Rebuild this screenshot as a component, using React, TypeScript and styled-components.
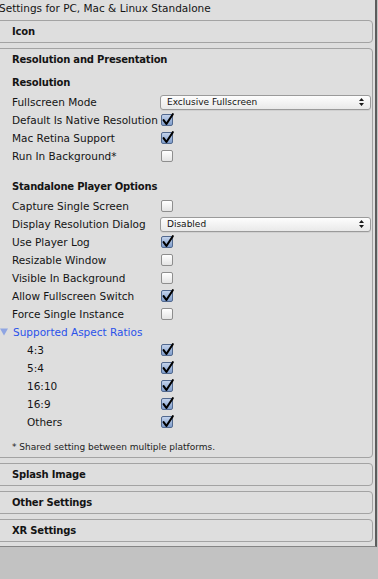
import React from 'react';
import styled, { createGlobalStyle } from 'styled-components';

const GlobalStyle = createGlobalStyle`
  html, body {
    margin: 0;
    padding: 0;
    background: #c2c2c2;
  }
  body {
    font-family: "DejaVu Sans", "Liberation Sans", sans-serif;
    color: #141414;
  }
`;

type Field =
  | { label: string; kind: 'select'; value: string; indent?: number }
  | { label: string; kind: 'check'; checked: boolean; indent?: number };

const resolutionFields: Field[] = [
  { label: 'Fullscreen Mode', kind: 'select', value: 'Exclusive Fullscreen' },
  { label: 'Default Is Native Resolution', kind: 'check', checked: true },
  { label: 'Mac Retina Support', kind: 'check', checked: true },
  { label: 'Run In Background*', kind: 'check', checked: false },
];

const playerFields: Field[] = [
  { label: 'Capture Single Screen', kind: 'check', checked: false },
  { label: 'Display Resolution Dialog', kind: 'select', value: 'Disabled' },
  { label: 'Use Player Log', kind: 'check', checked: true },
  { label: 'Resizable Window', kind: 'check', checked: false },
  { label: 'Visible In Background', kind: 'check', checked: false },
  { label: 'Allow Fullscreen Switch', kind: 'check', checked: true },
  { label: 'Force Single Instance', kind: 'check', checked: false },
];

const aspectFields: Field[] = [
  { label: '4:3', kind: 'check', checked: true, indent: 15 },
  { label: '5:4', kind: 'check', checked: true, indent: 15 },
  { label: '16:10', kind: 'check', checked: true, indent: 15 },
  { label: '16:9', kind: 'check', checked: true, indent: 15 },
  { label: 'Others', kind: 'check', checked: true, indent: 15 },
];

const Checkbox: React.FC<{ checked: boolean }> = ({ checked }) => (
  <Box $checked={checked}>
    {checked && (
      <CheckMark width="14" height="14" viewBox="0 0 14 14">
        <path d="M2.6 7.2 L5.4 11 L11.8 1.2" fill="none" stroke="#000" strokeWidth="2.1" strokeLinecap="round" strokeLinejoin="round" />
      </CheckMark>
    )}
  </Box>
);

const Popup: React.FC<{ value: string }> = ({ value }) => (
  <Select>
    <span>{value}</span>
    <svg width="5" height="8" viewBox="0 0 5 8">
      <path d="M2.5 0 L5 3 L0 3 Z M0 5 L5 5 L2.5 8 Z" fill="#1a1a1a" />
    </svg>
  </Select>
);

const FieldRow: React.FC<{ field: Field }> = ({ field }) => (
  <Row>
    <Label $indent={field.indent ?? 0}>{field.label}</Label>
    <Value>
      {field.kind === 'select' ? <Popup value={field.value} /> : <Checkbox checked={field.checked} />}
    </Value>
  </Row>
);

const App: React.FC = () => {
  return (
    <>
      <GlobalStyle />
      <Inspector>
        <Title>Settings for PC, Mac &amp; Linux Standalone</Title>
        <Panels>
          <Panel>
            <PanelHeader>Icon</PanelHeader>
          </Panel>
          <Panel>
            <PanelHeader>Resolution and Presentation</PanelHeader>
            <PanelBody>
              <SectionTitle>Resolution</SectionTitle>
              {resolutionFields.map((f) => (
                <FieldRow key={f.label} field={f} />
              ))}
              <SectionTitle $spaced>Standalone Player Options</SectionTitle>
              {playerFields.map((f) => (
                <FieldRow key={f.label} field={f} />
              ))}
              <Foldout>
                <svg width="8" height="8" viewBox="0 0 8 8">
                  <path d="M0 0.5 L8 0.5 L4 7.5 Z" fill="#8fa5e2" />
                </svg>
                <span>Supported Aspect Ratios</span>
              </Foldout>
              {aspectFields.map((f) => (
                <FieldRow key={f.label} field={f} />
              ))}
              <Footnote>* Shared setting between multiple platforms.</Footnote>
            </PanelBody>
          </Panel>
          <Panel>
            <PanelHeader>Splash Image</PanelHeader>
          </Panel>
          <Panel>
            <PanelHeader>Other Settings</PanelHeader>
          </Panel>
          <Panel>
            <PanelHeader>XR Settings</PanelHeader>
          </Panel>
        </Panels>
      </Inspector>
    </>
  );
};

export default App;

const Inspector = styled.div`
  width: 375px;
  height: 546px;
  background: #dedede;
  border-right: 2px solid #5c5c5c;
  border-bottom: 1px solid #858585;
  overflow: hidden;
`;

const Title = styled.div`
  height: 20px;
  line-height: 17px;
  margin-left: -1px;
  font-size: 10.5px;
  white-space: nowrap;
`;

const Panels = styled.div`
  display: flex;
  flex-direction: column;
  gap: 5px;
  width: 377px;
  margin-left: -4px;
`;

const Panel = styled.section`
  border: 1px solid #a3a3a3;
  border-radius: 4px;
  background: #dedede;
`;

const PanelHeader = styled.div`
  height: 21px;
  line-height: 21px;
  padding-left: 15px;
  font-size: 10px;
  font-weight: bold;
  letter-spacing: -0.2px;
  white-space: nowrap;
`;

const PanelBody = styled.div`
  padding: 2px 1px 4px 0;
`;

const SectionTitle = styled.div<{ $spaced?: boolean }>`
  height: 21px;
  line-height: 21px;
  margin-top: ${(p) => (p.$spaced ? '11px' : '0')};
  padding-left: 15px;
  font-size: 10px;
  font-weight: bold;
  letter-spacing: -0.2px;
  white-space: nowrap;
`;

const Row = styled.div`
  display: grid;
  grid-template-columns: 163px 1fr;
  align-items: center;
  height: 18px;
`;

const Label = styled.div<{ $indent: number }>`
  padding-left: ${(p) => 15 + p.$indent}px;
  font-size: 10.5px;
  white-space: nowrap;
  overflow: hidden;
`;

const Value = styled.div`
  display: flex;
  align-items: center;
  padding-left: 1px;
`;

const Box = styled.span<{ $checked: boolean }>`
  position: relative;
  display: block;
  width: 12px;
  height: 12px;
  box-sizing: border-box;
  border-radius: 2px;
  border: 1px solid ${(p) => (p.$checked ? '#52698f' : '#8e8e8e')};
  background: ${(p) =>
    p.$checked
      ? 'linear-gradient(#c3d3ec, #7f9dcb)'
      : 'linear-gradient(#ffffff, #e4e4e4)'};
`;

const CheckMark = styled.svg`
  position: absolute;
  left: -1px;
  top: -2px;
  overflow: visible;
`;

const Select = styled.div`
  display: flex;
  align-items: center;
  justify-content: space-between;
  box-sizing: border-box;
  width: 211px;
  height: 15px;
  margin-left: -1px;
  padding: 0 6px 0 6px;
  border: 1px solid #9a9a9a;
  border-radius: 3px;
  background: linear-gradient(#fdfdfd, #e9e9e9);
  box-shadow: 0 1px 0 rgba(0, 0, 0, 0.06);
  font-size: 9px;
  color: #111;
  white-space: nowrap;
`;

const Foldout = styled.div`
  display: flex;
  align-items: center;
  gap: 5px;
  height: 18px;
  padding-left: 3px;
  font-size: 10.5px;
  color: #2a52ea;
  white-space: nowrap;
`;

const Footnote = styled.div`
  margin-top: 10px;
  height: 12px;
  line-height: 12px;
  padding-left: 15px;
  font-size: 9px;
  color: #222;
  white-space: nowrap;
`;
